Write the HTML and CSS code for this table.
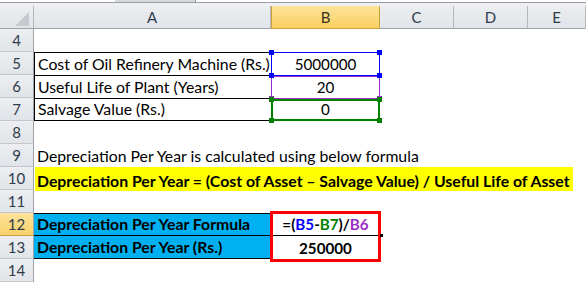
FILE: index.html
```html
<!DOCTYPE html>
<html>
<head>
<meta charset="utf-8">
<link rel="stylesheet" href="styles.css">
</head>
<body>
<div class="topbar"><div class="topbox"></div></div>
<div class="sheet">
  <div class="corner"><svg width="33" height="22" viewBox="0 0 33 22"><polygon points="15,20 29,20 29,6" fill="#c6c9cd"/></svg></div>
  <div class="ch">A</div>
  <div class="ch active">B</div>
  <div class="ch">C</div>
  <div class="ch">D</div>
  <div class="ch">E</div>

  <div class="rh">4</div><div class="c rest"></div>

  <div class="rh">5</div>
  <div class="c a tb first">Cost of Oil Refinery Machine (Rs.)</div>
  <div class="c b tb first">5000000<span class="ref ref-blue"><i class="h tl"></i><i class="h tr"></i><i class="h bl"></i><i class="h br"></i></span></div>
  <div class="c tail"></div>

  <div class="rh">6</div>
  <div class="c a tb">Useful Life of Plant (Years)</div>
  <div class="c b tb">20<span class="ref ref-purple"><i class="h bl"></i><i class="h br"></i></span></div>
  <div class="c tail"></div>

  <div class="rh">7</div>
  <div class="c a tb last">Salvage Value (Rs.)</div>
  <div class="c b tb last">0<span class="ref ref-green"><i class="h tl"></i><i class="h tr"></i><i class="h bl"></i><i class="h br"></i></span></div>
  <div class="c tail"></div>

  <div class="rh">8</div><div class="c rest"></div>

  <div class="rh">9</div><div class="c rest text">Depreciation Per Year is calculated using below formula</div>

  <div class="rh">10</div><div class="c rest"><span class="hilite">Depreciation Per Year = (Cost of Asset – Salvage Value) / Useful Life of Asset</span></div>

  <div class="rh">11</div><div class="c rest"></div>

  <div class="rh active">12</div>
  <div class="c a blue top mid">Depreciation Per Year Formula</div>
  <div class="c b bold mid redbox">=(<span class="r-blue">B5</span>-<span class="r-green">B7</span>)/<span class="r-purple">B6</span><i class="fill"></i></div>
  <div class="c tail"></div>

  <div class="rh">13</div>
  <div class="c a blue bot">Depreciation Per Year (Rs.)</div>
  <div class="c b bold">250000</div>
  <div class="c tail"></div>

  <div class="rh">14</div><div class="c rest"></div>
</div>
</body>
</html>
```
FILE: styles.css
```css
html, body {
  margin: 0;
  padding: 0;
  background: #ffffff;
}
body {
  width: 586px;
  height: 283px;
  overflow: hidden;
  font-family: Lato, "Liberation Sans", sans-serif;
  font-size: 15.8px;
  color: #000;
}
.topbar {
  height: 6px;
  background: #eef0f2;
  position: relative;
  border-top: 2px solid #ffffff;
  box-sizing: border-box;
  box-shadow: inset 0 1px 0 #9a9ea3;
}
.topbox {
  position: absolute;
  left: 115px;
  top: -2px;
  width: 81px;
  height: 2px;
  background: #d5d8dc;
  border-right: 1px solid #9a9ea3;
  box-sizing: border-box;
}
.sheet {
  display: grid;
  grid-template-columns: 34px 237px 109px 74px 74px 1fr;
  grid-auto-rows: 23px;
}
.corner, .ch, .rh {
  background: linear-gradient(#eceef1, #e1e4e8);
  color: #2f3b4a;
  box-sizing: border-box;
  display: flex;
  align-items: flex-end;
  justify-content: center;
  padding-bottom: 2px;
  line-height: 18px;
  font-size: 15px;
}
.corner {
  border-right: 1px solid #b3b7bc;
  border-bottom: 1px solid #9ea3a9;
  padding: 0;
  align-items: flex-start;
}
.ch {
  border-right: 1px solid #b3b7bc;
  border-bottom: 1px solid #9ea3a9;
}
.ch.active {
  background: linear-gradient(#fde49a, #f9d060);
  border: 1px solid #c9a042;
  border-top: none;
  color: #3a3320;
}
.rh {
  border-right: 1px solid #9ea3a9;
  border-bottom: 1px solid #c3c7cc;
}
.rh.active {
  background: linear-gradient(#fde39a, #f9d26a);
  border-bottom-color: #c9a042;
}
.c {
  box-sizing: border-box;
  display: flex;
  align-items: flex-end;
  padding: 0 0 2px 3px;
  line-height: 18px;
  white-space: nowrap;
  position: relative;
}
.rest {
  grid-column: 2 / -1;
}
.tail {
  grid-column: 4 / -1;
}
.b {
  justify-content: center;
  padding-left: 0;
  font-size: 15.2px;
}
.tb.a {
  border-left: 1px solid #000;
}
.tb {
  border-top: 1px solid #000;
}
.tb.b {
  border-left: 1px solid #000;
  border-right: 1px solid #000;
}
.tb.last {
  border-bottom: 1px solid #000;
}
.ref {
  position: absolute;
  left: -1px;
  right: -1px;
  top: -1px;
  bottom: -1px;
  border: 1px solid;
  pointer-events: none;
}
.ref-blue { border-color: #0000ff; z-index: 3; }
.ref-purple { border-color: #9b2fc7; top: 0; z-index: 2; }
.ref-green { border-color: #007f00; border-width: 2px; top: 0; z-index: 3; }
.h {
  position: absolute;
  width: 5px;
  height: 5px;
}
.ref-blue .h { background: #0000ff; }
.ref-purple .h { background: #9b2fc7; }
.ref-green .h { background: #007f00; }
.h.tl { left: -3px; top: -3px; }
.h.tr { right: -3px; top: -3px; }
.h.bl { left: -3px; bottom: -3px; }
.h.br { right: -3px; bottom: -3px; }
.ref-green .h.tl { left: -4px; top: -4px; }
.ref-green .h.tr { right: -4px; top: -4px; }
.ref-green .h.bl { left: -4px; bottom: -4px; }
.ref-green .h.br { right: -4px; bottom: -4px; }
.hilite {
  background: #ffff00;
  font-weight: bold;
  margin-left: -2px;
  padding: 2px 3px 1px 2px;
  height: 24px;
  box-sizing: border-box;
  align-self: stretch;
  display: flex;
  align-items: flex-end;
}
.blue {
  background: #00b0f0;
  font-weight: bold;
}
.top {
  border-top: 1px solid #000;
}
.bot {
  border-bottom: 1px solid #000;
}
.mid {
  border-bottom: 1px solid #000;
}
.bold {
  font-weight: bold;
}
.redbox::after {
  content: "";
  position: absolute;
  left: -1px;
  top: -2px;
  width: 111px;
  height: 51px;
  border: 3px solid #ff0000;
  box-sizing: border-box;
  z-index: 4;
}
.r-blue { color: #0000ff; }
.r-green { color: #008000; }
.r-purple { color: #9b2fc7; }
.fill {
  position: absolute;
  right: -3px;
  bottom: -2px;
  width: 3px;
  height: 3px;
  background: #000;
  z-index: 5;
}
```
